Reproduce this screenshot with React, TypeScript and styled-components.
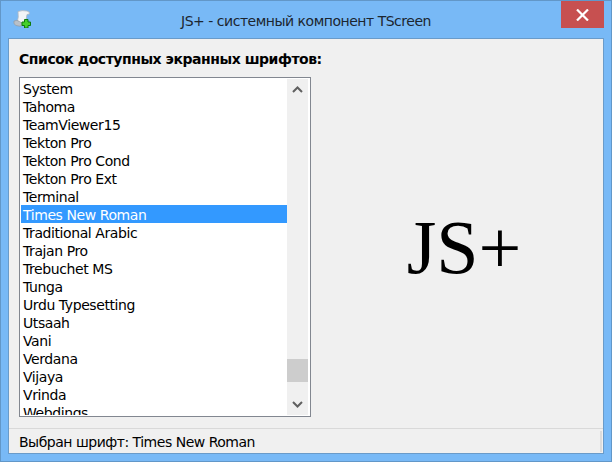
import styled, { createGlobalStyle } from "styled-components";

const fonts = [
  "System",
  "Tahoma",
  "TeamViewer15",
  "Tekton Pro",
  "Tekton Pro Cond",
  "Tekton Pro Ext",
  "Terminal",
  "Times New Roman",
  "Traditional Arabic",
  "Trajan Pro",
  "Trebuchet MS",
  "Tunga",
  "Urdu Typesetting",
  "Utsaah",
  "Vani",
  "Verdana",
  "Vijaya",
  "Vrinda",
  "Webdings",
];

const selectedFont = "Times New Roman";

const GlobalStyle = createGlobalStyle`
  html, body {
    margin: 0;
    padding: 0;
    overflow: hidden;
  }
  body {
    font-family: "DejaVu Sans", "Noto Sans", sans-serif;
  }
`;

const Window = styled.div`
  width: 612px;
  height: 462px;
  box-sizing: border-box;
  display: flex;
  flex-direction: column;
  background-color: #78b9f6;
  border: 1px solid #6297c8;
  padding: 0 7px 7px 7px;
`;

const TitleBar = styled.div`
  height: 37px;
  flex: none;
  display: flex;
  align-items: flex-start;
  position: relative;
`;

const TitleIcon = styled.svg`
  width: 18px;
  height: 18px;
  margin: 9px 0 0 5px;
  flex: none;
`;

const TitleText = styled.div`
  position: absolute;
  left: 0;
  right: 0;
  top: 11px;
  text-align: center;
  font-size: 14px;
  line-height: 18px;
  letter-spacing: -0.48px;
  color: #1c2630;
`;

const CloseButton = styled.div`
  width: 43px;
  height: 27px;
  margin-left: auto;
  background-color: #c75050;
  display: flex;
  align-items: center;
  justify-content: center;
`;

const Client = styled.div`
  flex: 1;
  min-height: 0;
  display: flex;
  flex-direction: column;
  background-color: #f0f0f0;
  border: 1px solid #6a9bc9;
`;

const Content = styled.div`
  flex: 1;
  min-height: 0;
  display: flex;
  flex-direction: column;
  padding: 11px 0 0 10px;
`;

const ListTitle = styled.div`
  font-size: 14px;
  font-weight: 700;
  line-height: 18px;
  letter-spacing: -0.46px;
  color: #000;
  margin-bottom: 9px;
`;

const Body = styled.div`
  display: flex;
`;

const ListBox = styled.div`
  width: 292px;
  height: 340px;
  box-sizing: border-box;
  flex: none;
  display: flex;
  background-color: #fff;
  border: 1px solid #828790;
  padding: 1px 2px 1px 1px;
`;

const Rows = styled.div`
  flex: 1;
  min-width: 0;
  overflow: hidden;
`;

const Row = styled.div<{ $selected?: boolean }>`
  height: 18px;
  box-sizing: border-box;
  padding: 1px 0 0 2px;
  line-height: 18px;
  font-size: 14px;
  letter-spacing: -0.42px;
  white-space: nowrap;
  color: ${(props) => (props.$selected ? "#fff" : "#000")};
  background-color: ${(props) => (props.$selected ? "#3399ff" : "transparent")};
`;

const ScrollBar = styled.div`
  width: 21px;
  flex: none;
  display: flex;
  flex-direction: column;
  background-color: #f0f0f0;
`;

const ScrollButton = styled.div`
  height: 21px;
  flex: none;
  display: flex;
  align-items: center;
  justify-content: center;
`;

const ScrollTrack = styled.div`
  flex: 1;
  padding-top: 259px;
`;

const ScrollThumb = styled.div`
  height: 23px;
  background-color: #cdcdcd;
`;

const Preview = styled.div`
  flex: 1;
  display: flex;
  align-items: center;
  justify-content: center;
  padding-left: 14px;
  font-family: "Liberation Serif", "Times New Roman", serif;
  font-size: 76px;
  color: #000;
  line-height: 1;
`;

const StatusBar = styled.div`
  height: 25px;
  box-sizing: border-box;
  flex: none;
  display: flex;
  padding: 2px 1px 1px 0;
  border-top: 1px solid #d9d9d9;
`;

const StatusPanel = styled.div`
  flex: 1;
  display: flex;
  align-items: center;
  padding-left: 10px;
  font-size: 14px;
  letter-spacing: -0.49px;
  color: #000;
  border-right: 2px solid #dcdcdc;
`;

const Arrow = ({ up }: { up?: boolean }) => (
  <svg width="11" height="7" viewBox="0 0 11 7">
    <path
      d={up ? "M1 6 L5.5 1.5 L10 6" : "M1 1 L5.5 5.5 L10 1"}
      fill="none"
      stroke="#606060"
      strokeWidth="2"
    />
  </svg>
);

const App = () => {
  return (
    <>
      <GlobalStyle />
      <Window>
        <TitleBar>
          <TitleIcon viewBox="0 0 18 18">
            {/* paper */}
            <path
              d="M5 1.5 Q9 0 14 1 Q17 1.5 16.5 4 L14 4.5 L12.5 13 L4 13 Q6 7 5 1.5 Z"
              fill="#f2f4f7"
              stroke="#aeb6bf"
              strokeWidth="0.8"
            />
            {/* roll */}
            <path
              d="M1 11 Q4 9.5 6.5 11.5 L11 14.5 Q7 17.5 3 15.5 Q0 14 1 11 Z"
              fill="#b9c0c8"
              stroke="#8a929b"
              strokeWidth="0.6"
            />
            {/* plus */}
            <path
              d="M11.5 9.5 H15 V12 H17.5 V15.5 H15 V18 H11.5 V15.5 H9 V12 H11.5 Z"
              fill="#46d02c"
              stroke="#0f7a0c"
              strokeWidth="1"
            />
          </TitleIcon>
          <TitleText>JS+ - системный компонент TScreen</TitleText>
          <CloseButton>
            <svg width="13" height="12" viewBox="0 0 13 12">
              <path d="M1 0.5 L12 11.5 M12 0.5 L1 11.5" stroke="#fff" strokeWidth="2.2" />
            </svg>
          </CloseButton>
        </TitleBar>
        <Client>
          <Content>
            <ListTitle>Список доступных экранных шрифтов:</ListTitle>
            <Body>
              <ListBox>
                <Rows>
                  {fonts.map((font) => (
                    <Row key={font} $selected={font === selectedFont}>
                      {font}
                    </Row>
                  ))}
                </Rows>
                <ScrollBar>
                  <ScrollButton>
                    <Arrow up />
                  </ScrollButton>
                  <ScrollTrack>
                    <ScrollThumb />
                  </ScrollTrack>
                  <ScrollButton>
                    <Arrow />
                  </ScrollButton>
                </ScrollBar>
              </ListBox>
              <Preview>JS+</Preview>
            </Body>
          </Content>
          <StatusBar>
            <StatusPanel>Выбран шрифт: {selectedFont}</StatusPanel>
          </StatusBar>
        </Client>
      </Window>
    </>
  );
};

export default App;
